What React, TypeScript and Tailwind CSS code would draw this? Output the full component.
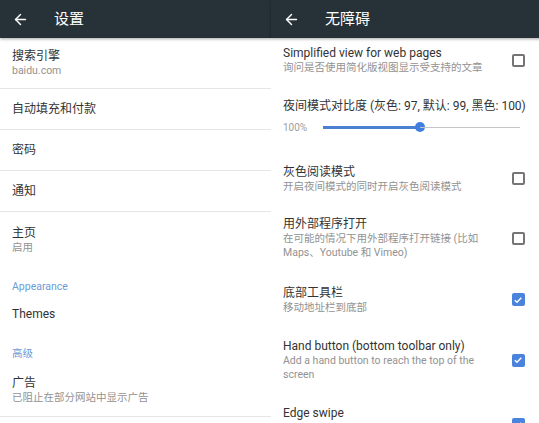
import React from 'react';
import { ArrowLeft } from 'lucide-react';

const font = { fontFamily: "Roboto, 'Noto Sans CJK SC', sans-serif" };

const Header: React.FC<{ title: string }> = ({ title }) => (
  <div className="relative z-10 flex h-[38px] shrink-0 items-center bg-[#263238] shadow-[0_1px_3px_rgba(0,0,0,0.35)]">
    <ArrowLeft className="ml-[12px] text-white" size={17} strokeWidth={2} />
    <span className="ml-[25px] text-[15px] leading-none text-white">{title}</span>
  </div>
);

const Checkbox: React.FC<{ checked?: boolean; className?: string }> = ({ checked, className = '' }) =>
  checked ? (
    <div className={`flex h-[13px] w-[13px] shrink-0 items-center justify-center rounded-[2px] bg-[#4a83dc] ${className}`}>
      <svg width="10" height="10" viewBox="0 0 10 10" fill="none">
        <path d="M1.8 5.2 4 7.3 8.3 2.8" stroke="white" strokeWidth="1.5" />
      </svg>
    </div>
  ) : (
    <div className={`h-[13px] w-[13px] shrink-0 rounded-[2px] border-2 border-[#757575] ${className}`} />
  );

const LeftRow: React.FC<{ title: string; sub?: string; h: string; border?: boolean }> = ({
  title,
  sub,
  h,
  border = true,
}) => (
  <div className={`flex shrink-0 flex-col justify-center px-[12px] ${h} ${border ? 'border-b border-[#e6e6e6]' : ''}`}>
    <span className="text-[12px] leading-[16px] text-[#333]">{title}</span>
    {sub && <span className="text-[10.5px] leading-[14px] text-[#929292]">{sub}</span>}
  </div>
);

const RightRow: React.FC<{ title: string; sub: string; h: string; checked?: boolean }> = ({
  title,
  sub,
  h,
  checked,
}) => (
  <div className={`flex shrink-0 items-center pl-[12px] pr-[18px] ${h}`}>
    <div className="flex flex-1 flex-col pr-[12px]">
      <span className="text-[12px] leading-[16px] text-[#333]">{title}</span>
      <span className="text-[10.5px] leading-[14px] text-[#929292]">{sub}</span>
    </div>
    <Checkbox checked={checked} />
  </div>
);

export default function App() {
  return (
    <div className="flex h-[423px] w-[539px] overflow-hidden bg-white" style={font}>
      <div className="flex w-[271px] shrink-0 flex-col">
        <Header title="设置" />
        <LeftRow title="搜索引擎" sub="baidu.com" h="h-[51px]" />
        <LeftRow title="自动填充和付款" h="h-[41px]" />
        <LeftRow title="密码" h="h-[41px]" />
        <LeftRow title="通知" h="h-[41px]" />
        <LeftRow title="主页" sub="启用" h="h-[56px]" border={false} />
        <div className="shrink-0 px-[12px] pt-[12px] pb-[2px] text-[10.5px] leading-[14px] text-[#6b9bd6]">Appearance</div>
        <LeftRow title="Themes" h="h-[36px]" border={false} />
        <div className="shrink-0 px-[12px] pt-[15px] pb-[2px] text-[10.5px] leading-[14px] text-[#6b9bd6]">高级</div>
        <LeftRow title="广告" sub="已阻止在部分网站中显示广告" h="h-[54px]" />
      </div>
      <div className="flex flex-1 flex-col">
        <Header title="无障碍" />
        <RightRow
          title="Simplified view for web pages"
          sub="询问是否使用简化版视图显示受支持的文章"
          h="h-[44px]"
        />
        <div className="flex h-[68px] shrink-0 flex-col pl-[12px] pr-[17px] pt-[16px]">
          <span className="whitespace-nowrap text-[12px] leading-[16px] text-[#333]">
            夜间模式对比度 (灰色: 97, 默认: 99, 黑色: 100)
          </span>
          <div className="mt-[6px] flex h-[14px] items-center">
            <span className="w-[40px] text-[10px] text-[#9e9e9e]">100%</span>
            <div className="flex flex-1 items-center pr-[6px]">
              <div className="h-[3px] w-[97px] bg-[#4a7fd2]" />
              <div className="-mx-[5px] h-[10px] w-[10px] shrink-0 rounded-full bg-[#3f7ee0]" />
              <div className="h-px flex-1 bg-[#c4c4c4]" />
            </div>
          </div>
        </div>
        <RightRow title="灰色阅读模式" sub="开启夜间模式的同时开启灰色阅读模式" h="h-[57px]" />
        <RightRow
          title="用外部程序打开"
          sub="在可能的情况下用外部程序打开链接 (比如 Maps、Youtube 和 Vimeo)"
          h="h-[62px]"
        />
        <RightRow title="底部工具栏" sub="移动地址栏到底部" h="h-[61px]" checked />
        <RightRow
          title="Hand button (bottom toolbar only)"
          sub="Add a hand button to reach the top of the screen"
          h="h-[60px]"
          checked
        />
        <div className="flex h-[60px] shrink-0 items-start pl-[12px] pr-[18px] pt-[15px]">
          <span className="flex-1 text-[12px] leading-[16px] text-[#333]">Edge swipe</span>
          <Checkbox checked className="mt-[13px]" />
        </div>
      </div>
    </div>
  );
}
